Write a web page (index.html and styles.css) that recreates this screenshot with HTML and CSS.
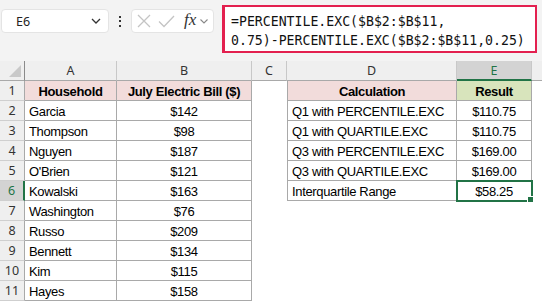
FILE: index.html
```html
<!DOCTYPE html>
<html lang="en">
<head>
    <meta charset="UTF-8">
    <title>Interquartile Range</title>
    <link rel="stylesheet" href="styles.css">
</head>
<body>
    <div class="ribbon">
        <div class="name-box">
            <span>E6</span>
            <svg width="10" height="6" viewBox="0 0 10 6"><path d="M1 1l4 4 4-4" fill="none" stroke="#333" stroke-width="1.3"/></svg>
        </div>
        <div class="grip"><i></i><i></i><i></i></div>
        <div class="fx-box">
            <svg class="cancel" width="14" height="14" viewBox="0 0 14 14"><path d="M1 1l12 12M13 1L1 13" stroke="#c4c4c4" stroke-width="1.3"/></svg>
            <svg class="enter" width="17" height="13" viewBox="0 0 17 13"><path d="M1 6.5l5 5L16 1" fill="none" stroke="#c4c4c4" stroke-width="1.3"/></svg>
            <span class="fx">fx</span>
            <svg width="8" height="5" viewBox="0 0 8 5"><path d="M0.5 0.5l3.5 3.5 3.5-3.5" fill="none" stroke="#888" stroke-width="1.1"/></svg>
        </div>
        <div class="formula">=PERCENTILE.EXC($B$2:$B$11,<br>0.75)-PERCENTILE.EXC($B$2:$B$11,0.25)</div>
    </div>

    <div class="sheet">
        <!-- column headers -->
        <div class="hd corner"><svg width="12" height="12" viewBox="0 0 12 12"><path d="M12 0V12H0z" fill="#c9c9c9"/></svg></div>
        <div class="hd">A</div>
        <div class="hd">B</div>
        <div class="hd">C</div>
        <div class="hd">D</div>
        <div class="hd active">E</div>
        <div class="hd last"></div>

        <div class="rn">1</div>
        <div class="c title">Household</div>
        <div class="c title mid">July Electric Bill ($)</div>
        <div></div>
        <div class="c first title">Calculation</div>
        <div class="c title mid result">Result</div>
        <div></div>

        <div class="rn">2</div>
        <div class="c">Garcia</div>
        <div class="c mid">$142</div>
        <div></div>
        <div class="c first">Q1 with PERCENTILE.EXC</div>
        <div class="c mid">$110.75</div>
        <div></div>

        <div class="rn">3</div>
        <div class="c">Thompson</div>
        <div class="c mid">$98</div>
        <div></div>
        <div class="c first">Q1 with QUARTILE.EXC</div>
        <div class="c mid">$110.75</div>
        <div></div>

        <div class="rn">4</div>
        <div class="c">Nguyen</div>
        <div class="c mid">$187</div>
        <div></div>
        <div class="c first">Q3 with PERCENTILE.EXC</div>
        <div class="c mid">$169.00</div>
        <div></div>

        <div class="rn">5</div>
        <div class="c">O'Brien</div>
        <div class="c mid">$121</div>
        <div></div>
        <div class="c first">Q3 with QUARTILE.EXC</div>
        <div class="c mid">$169.00</div>
        <div></div>

        <div class="rn active">6</div>
        <div class="c">Kowalski</div>
        <div class="c mid">$163</div>
        <div></div>
        <div class="c first">Interquartile Range</div>
        <div class="c mid selected">$58.25</div>
        <div></div>

        <div class="rn">7</div>
        <div class="c">Washington</div>
        <div class="c mid">$76</div>
        <div></div><div></div><div></div><div></div>

        <div class="rn">8</div>
        <div class="c">Russo</div>
        <div class="c mid">$209</div>
        <div></div><div></div><div></div><div></div>

        <div class="rn">9</div>
        <div class="c">Bennett</div>
        <div class="c mid">$134</div>
        <div></div><div></div><div></div><div></div>

        <div class="rn">10</div>
        <div class="c">Kim</div>
        <div class="c mid">$115</div>
        <div></div><div></div><div></div><div></div>

        <div class="rn">11</div>
        <div class="c">Hayes</div>
        <div class="c mid">$158</div>
        <div></div><div></div><div></div><div></div>
    </div>
</body>
</html>
```

FILE: styles.css
```css
* {
    margin: 0;
    padding: 0;
    box-sizing: border-box;
}

body {
    width: 542px;
    height: 302px;
    overflow: hidden;
    background: #ffffff;
    font-family: "Liberation Sans", Arial, sans-serif;
    color: #000;
}

/* formula bar */
.ribbon {
    height: 61px;
    background: #f3f3f3;
    display: flex;
    align-items: flex-start;
    padding: 5px 0 0 1px;
}

.name-box {
    width: 108px;
    height: 24px;
    margin-top: 4px;
    background: #fff;
    border: 1px solid #e4e4e4;
    border-radius: 4px;
    display: flex;
    align-items: center;
    justify-content: space-between;
    padding: 0 7px 0 14px;
    font-family: "Noto Sans", sans-serif;
    font-size: 12.5px;
    color: #222;
}

.grip {
    width: 22px;
    height: 24px;
    margin-top: 4px;
    display: flex;
    flex-direction: column;
    align-items: center;
    justify-content: center;
    gap: 2.5px;
}

.grip i {
    width: 2px;
    height: 2px;
    background: #333;
}

.fx-box {
    width: 83px;
    height: 24px;
    margin-top: 4px;
    background: #fff;
    border: 1px solid #e4e4e4;
    border-radius: 4px;
    display: flex;
    align-items: center;
    padding-left: 5px;
}

.fx-box .enter {
    margin-left: 7px;
}

.fx {
    font-family: "Liberation Serif", serif;
    font-style: italic;
    font-size: 17px;
    color: #333;
    margin: -3px 4px 0 9px;
}

.formula {
    width: 315px;
    height: 48px;
    margin-left: 8px;
    background: #fff;
    border: 2px solid #e3204f;
    border-left-width: 3px;
    padding: 5px 0 0 6px;
    font-family: "DejaVu Sans Mono", monospace;
    font-size: 13.2px;
    line-height: 19px;
    color: #111;
    white-space: nowrap;
}

/* grid */
.sheet {
    display: grid;
    grid-template-columns: 25px 92px 135px 35px 170px 75px 1fr;
    grid-auto-rows: 20px;
}

.hd {
    background: #efefef;
    border-right: 1px solid #c8c8c8;
    border-bottom: 1px solid #a9a9a9;
    display: flex;
    align-items: center;
    justify-content: center;
    font-family: "Noto Sans", sans-serif;
    font-size: 12.5px;
    color: #333;
}

.hd.corner {
    justify-content: flex-end;
    align-items: flex-end;
    padding: 0 3px 3px 0;
    border-right-color: #8a8a8a;
}

.hd.last {
    border-right: none;
}

.hd.active {
    background: #d3d3d3;
    color: #217346;
    border-bottom: 2px solid #217346;
}

.rn {
    background: #efefef;
    border-right: 1px solid #a9a9a9;
    border-bottom: 1px solid #cfcfcf;
    display: flex;
    align-items: center;
    justify-content: center;
    font-family: "Noto Sans", sans-serif;
    font-size: 12.5px;
    color: #333;
}

.rn.active {
    background: #d3d3d3;
    color: #217346;
    border-right: 2px solid #217346;
}

.c {
    border-right: 1px solid #a9a9a9;
    border-bottom: 1px solid #a9a9a9;
    display: flex;
    align-items: center;
    padding: 1px 0 0 4px;
    font-size: 13px;
    letter-spacing: -0.35px;
    white-space: nowrap;
}

.c.first {
    border-left: 1px solid #a9a9a9;
}

.c.mid {
    justify-content: center;
    padding-left: 0;
}

.c.title {
    background: #f2dcdb;
    font-weight: bold;
    justify-content: center;
    padding-left: 0;
}

.c.title.result {
    background: #d8e4bc;
}

.c.selected {
    position: relative;
    outline: 2px solid #217346;
    outline-offset: -1px;
}

.c.selected::after {
    content: "";
    position: absolute;
    right: -3px;
    bottom: -3px;
    width: 5px;
    height: 5px;
    background: #217346;
    border: 1px solid #fff;
}
```
